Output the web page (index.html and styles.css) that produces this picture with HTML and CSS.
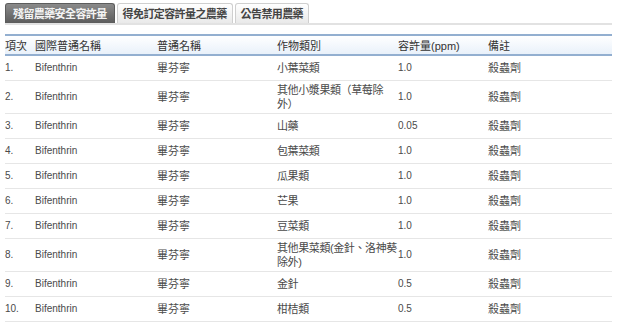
FILE: index.html
```html
<!DOCTYPE html>
<html lang="zh-Hant">
    <head>
        <meta charset="utf-8">
        <title>殘留農藥安全容許量</title>
        <link rel="stylesheet" href="styles.css">
    </head>
    <body>
        <div class="page">
            <ul class="tabs">
                <li class="tab active">殘留農藥安全容許量</li>
                <li class="tab">得免訂定容許量之農藥</li>
                <li class="tab">公告禁用農藥</li>
            </ul>

            <table class="mrl">
                <colgroup>
                    <col class="c-no">
                    <col class="c-intl">
                    <col class="c-name">
                    <col class="c-crop">
                    <col class="c-ppm">
                    <col class="c-note">
                </colgroup>
                <thead>
                    <tr>
                        <th>項次</th>
                        <th>國際普通名稱</th>
                        <th>普通名稱</th>
                        <th>作物類別</th>
                        <th>容許量(ppm)</th>
                        <th>備註</th>
                    </tr>
                </thead>
                <tbody>
                    <tr><td class="en">1.</td><td class="en">Bifenthrin</td><td>畢芬寧</td><td class="crop">小葉菜類</td><td class="en">1.0</td><td>殺蟲劑</td></tr>
                    <tr><td class="en">2.</td><td class="en">Bifenthrin</td><td>畢芬寧</td><td class="crop">其他小漿果類（草莓除外）</td><td class="en">1.0</td><td>殺蟲劑</td></tr>
                    <tr><td class="en">3.</td><td class="en">Bifenthrin</td><td>畢芬寧</td><td class="crop">山藥</td><td class="en">0.05</td><td>殺蟲劑</td></tr>
                    <tr><td class="en">4.</td><td class="en">Bifenthrin</td><td>畢芬寧</td><td class="crop">包葉菜類</td><td class="en">1.0</td><td>殺蟲劑</td></tr>
                    <tr><td class="en">5.</td><td class="en">Bifenthrin</td><td>畢芬寧</td><td class="crop">瓜果類</td><td class="en">1.0</td><td>殺蟲劑</td></tr>
                    <tr><td class="en">6.</td><td class="en">Bifenthrin</td><td>畢芬寧</td><td class="crop">芒果</td><td class="en">1.0</td><td>殺蟲劑</td></tr>
                    <tr><td class="en">7.</td><td class="en">Bifenthrin</td><td>畢芬寧</td><td class="crop">豆菜類</td><td class="en">1.0</td><td>殺蟲劑</td></tr>
                    <tr><td class="en">8.</td><td class="en">Bifenthrin</td><td>畢芬寧</td><td class="crop">其他果菜類(金針、洛神葵除外)</td><td class="en">1.0</td><td>殺蟲劑</td></tr>
                    <tr><td class="en">9.</td><td class="en">Bifenthrin</td><td>畢芬寧</td><td class="crop">金針</td><td class="en">0.5</td><td>殺蟲劑</td></tr>
                    <tr><td class="en">10.</td><td class="en">Bifenthrin</td><td>畢芬寧</td><td class="crop">柑桔類</td><td class="en">0.5</td><td>殺蟲劑</td></tr>
                </tbody>
            </table>
        </div>
    </body>
</html>
```

FILE: styles.css
```css
body {
    margin: 0;
    background: #fff;
    color: #4a4a4a;
    font-family: "Liberation Sans", "Noto Sans CJK TC", sans-serif;
    font-size: 11px;
}
.page {
    width: 607px;
    padding: 3px 0 0 5px;
}

/* tab strip */
.tabs {
    display: flex;
    gap: 2px;
    list-style: none;
    margin: 0;
    padding: 0;
    border-bottom: 2px solid #e2e2e2;
}
.tab {
    height: 19px;
    line-height: 19px;
    padding: 0 5px;
    border: 1px solid #cfcfcf;
    border-bottom: none;
    border-radius: 3px 3px 0 0;
    background: linear-gradient(#ffffff, #e9e9e9);
    color: #444;
    font-family: "Noto Sans CJK TC", sans-serif;
    font-weight: bold;
    font-size: 11px;
    letter-spacing: -0.6px;
}
.tab.active {
    padding: 0 7px;
    background: linear-gradient(#8a8a8a, #5c5c5c);
    border-color: #5c5c5c;
    color: #f4f4f4;
}

/* residue table */
.mrl {
    width: 607px;
    margin-top: 9px;
    border-collapse: collapse;
    table-layout: fixed;
}
.c-no { width: 30px; }
.c-intl { width: 122px; }
.c-name { width: 120px; }
.c-crop { width: 121px; }
.c-ppm { width: 90px; }
.mrl th {
    height: 18px;
    padding: 0;
    text-align: left;
    font-weight: normal;
    color: #333;
    background: linear-gradient(#ffffff, #e9f1fa);
    border-top: 2px solid #93afd0;
    border-bottom: 2px solid #93afd0;
}
.mrl td {
    height: 20px;
    padding: 2px 4px 2px 0;
    line-height: 14px;
    vertical-align: middle;
    border-bottom: 1px solid #e6e6e6;
}
.mrl td.en {
    font-size: 10px;
}
.mrl td.crop {
    padding-right: 0;
    letter-spacing: -0.4px;
}
```
